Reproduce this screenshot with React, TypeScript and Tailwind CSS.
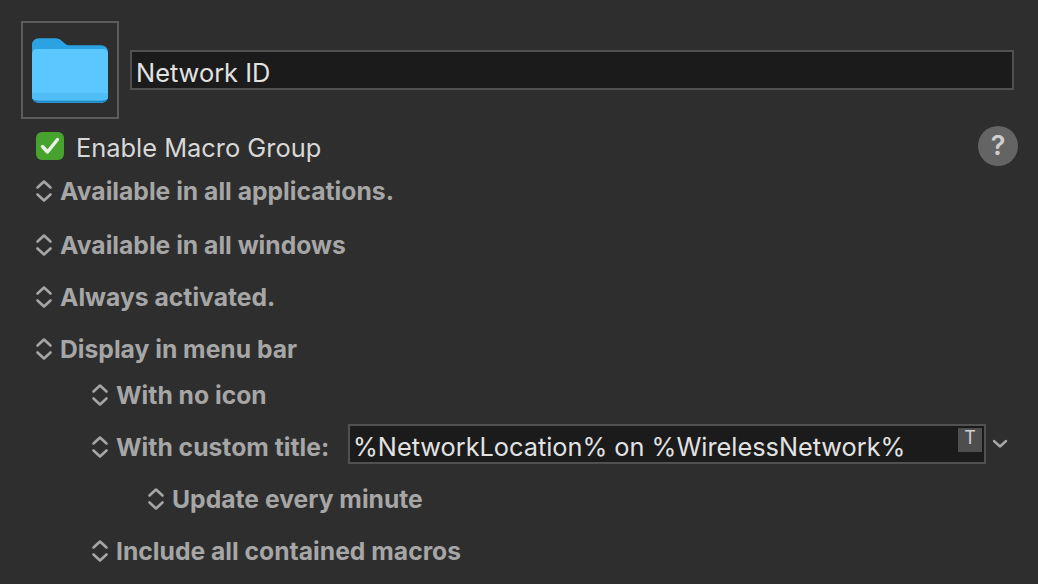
const font = "font-['Inter','Noto_Sans',sans-serif]";

function UpDown() {
  return (
    <svg width="18" height="24" viewBox="0 0 18 24" fill="none" stroke="#a6a6a6" strokeWidth="2.600" strokeLinecap="round" strokeLinejoin="round" className="shrink-0">
      <path d="M2.500 8.500 9 2.500l6.500 6" />
      <path d="M2.500 15.500 9 21.500l6.500-6" />
    </svg>
  );
}

function FolderIcon() {
  return (
    <svg width="76" height="65" viewBox="0 0 78 66">
      <path d="M0 7C0 3 3 0 7 0h17c3 0 5 1 7 3l3 2.500c1.500 1.200 3 1.500 5 1.500h32c4 0 7 3 7 7v45c0 4-3 7-7 7H7c-4 0-7-3-7-7Z" fill="#2ba3e3" />
      <path d="M0 16c0-3 2-5 5-5h68c3 0 5 2 5 5v43c0 4-3 7-7 7H7c-4 0-7-3-7-7Z" fill="#5ac8ff" />
      <path d="M0 56h78v3c0 4-3 7-7 7H7c-4 0-7-3-7-7Z" fill="#4fbdf6" />
      <path d="M0 62c1 2 4 4 7 4h64c3 0 6-2 7-4-1 1-4 2-7 2H7c-3 0-6-1-7-2Z" fill="#1f86c4" />
    </svg>
  );
}

function Row({ label, className }: { label: string; className: string }) {
  return (
    <div className={`flex items-center gap-[7px] text-[24.7px] leading-[30px] font-bold text-[#a6a6a6] ${className}`}>
      <UpDown />
      <span>{label}</span>
    </div>
  );
}

export default function App() {
  return (
    <div className={`${font} w-[1038px] h-[584px] overflow-hidden bg-[#2e2e2e] pt-[21px] pl-[21px] pr-[24px]`}>
      <div className="flex items-center gap-[11px]">
        <div className="w-[98px] h-[98px] shrink-0 border-2 border-[#5c5c5c] flex items-center justify-center">
          <FolderIcon />
        </div>
        <div className="flex-1 h-[40px] bg-[#1b1b1b] border-2 border-[#515151] pl-[4px] pt-[6px] flex items-center text-[25.4px] text-[#e2e2e2]">
          Network ID
        </div>
      </div>

      <div className="flex items-center justify-between mt-[7px] pl-[15px]">
        <div className="flex items-center gap-[13px]">
          <div className="w-[28px] h-[28px] rounded-[6px] bg-[#47a32e] flex items-center justify-center">
            <svg width="22" height="20" viewBox="0 0 22 20" fill="none" stroke="#e9f5e4" strokeWidth="3.400" strokeLinecap="round" strokeLinejoin="round">
              <path d="M3.500 10.500 8.500 16 18.500 3.500" />
            </svg>
          </div>
          <span className="text-[25.4px] leading-[30px] text-[#d8d8d8] pt-[4px] -ml-[1px]">Enable Macro Group</span>
        </div>
        <div className="w-[40px] h-[40px] -mr-[4px] rounded-full bg-[#646464] flex items-center justify-center text-[27px] font-semibold text-[#cfcfcf]">
          ?
        </div>
      </div>

      <Row label="Available in all applications." className="ml-[14px] mt-[10px]" />
      <Row label="Available in all windows" className="ml-[14px] mt-[24px]" />
      <Row label="Always activated." className="ml-[14px] mt-[22px]" />
      <Row label="Display in menu bar" className="ml-[14px] mt-[22px]" />
      <Row label="With no icon" className="ml-[70px] mt-[16px]" />

      <div className="flex items-start ml-[70px] mt-[22px]">
        <Row label="With custom title:" className="w-[257px] shrink-0" />
        <div className="relative -mt-[8px] w-[638px] h-[40px] bg-[#1b1b1b] border-2 border-[#515151] pl-[3px] pt-[6px] flex items-center text-[25.3px] text-[#e2e2e2]">
          %NetworkLocation% on %WirelessNetwork%
          <div className="absolute right-[2px] top-[2px] w-[24px] h-[24px] bg-[#4e4e4e] flex items-start justify-center text-[18px] leading-[20px] text-[#d0d0d0]">
            T
          </div>
        </div>
        <svg width="16" height="10" viewBox="0 0 16 10" fill="none" stroke="#a6a6a6" strokeWidth="2.400" strokeLinecap="round" strokeLinejoin="round" className="ml-[6px] mt-[7px]">
          <path d="M2 2l6 5.500L14 2" />
        </svg>
      </div>

      <Row label="Update every minute" className="ml-[126px] mt-[20px]" />
      <Row label="Include all contained macros" className="ml-[70px] mt-[22px]" />
    </div>
  );
}
